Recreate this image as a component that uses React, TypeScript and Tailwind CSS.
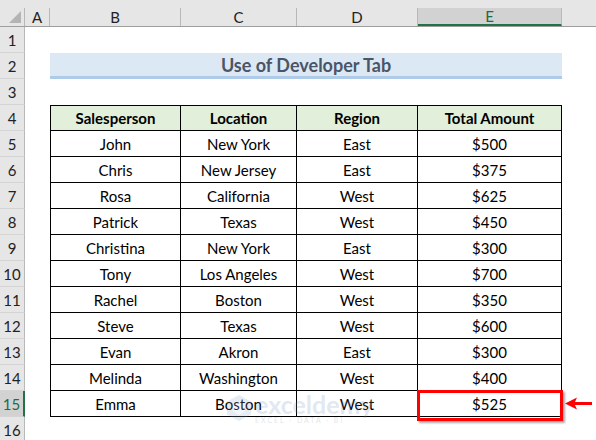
import React from 'react';

const rows = [
  ['John', 'New York', 'East', '$500'],
  ['Chris', 'New Jersey', 'East', '$375'],
  ['Rosa', 'California', 'West', '$625'],
  ['Patrick', 'Texas', 'West', '$450'],
  ['Christina', 'New York', 'East', '$300'],
  ['Tony', 'Los Angeles', 'West', '$700'],
  ['Rachel', 'Boston', 'West', '$350'],
  ['Steve', 'Texas', 'West', '$600'],
  ['Evan', 'Akron', 'East', '$300'],
  ['Melinda', 'Washington', 'West', '$400'],
  ['Emma', 'Boston', 'West', '$525'],
];

const widths = ['w-[131px]', 'w-[116px]', 'w-[121px]', 'w-[144px]'];

function RowHead({ n, active }: { n: number; active?: boolean }) {
  return (
    <div
      className={`w-[25px] h-[26px] shrink-0 flex items-center justify-center pt-[2px] text-[15px] border-b border-[#d4d4d4] ${
        active
          ? 'bg-[#d2d2d2] text-[#1e6b44] border-r-2 border-r-[#217346]'
          : 'bg-[#e6e6e6] text-[#222] border-r border-r-[#b8b8b8]'
      }`}
    >
      {n}
    </div>
  );
}

export default function App() {
  return (
    <div className="w-[596px] h-[440px] overflow-hidden bg-white relative font-['Lato','Open_Sans',sans-serif] text-black">
      {/* strip above headers */}
      <div className="h-[8px] bg-[#e6e6e6]" />

      {/* column headers */}
      <div className="flex h-[19px] bg-[#e6e6e6] border-b border-[#9e9e9e] text-[15px] text-[#222]">
        <div className="w-[25px] shrink-0 relative border-r border-[#b8b8b8]">
          <div className="absolute right-[3px] bottom-[3px] w-0 h-0 border-l-[12px] border-l-transparent border-b-[12px] border-b-[#b4b4b4]" />
        </div>
        <div className="w-[25px] shrink-0 flex items-center justify-center border-r border-[#b8b8b8]">A</div>
        <div className="w-[131px] shrink-0 flex items-center justify-center border-r border-[#b8b8b8]">B</div>
        <div className="w-[116px] shrink-0 flex items-center justify-center border-r border-[#b8b8b8]">C</div>
        <div className="w-[121px] shrink-0 flex items-center justify-center border-r border-[#b8b8b8]">D</div>
        <div className="w-[144px] shrink-0 flex items-center justify-center bg-[#d2d2d2] text-[#1e6b44] border-b-2 border-[#217346] border-r border-r-[#b8b8b8]">E</div>
        <div className="flex-1" />
      </div>

      {/* row 1 */}
      <div className="flex">
        <RowHead n={1} />
      </div>

      {/* row 2 title */}
      <div className="flex">
        <RowHead n={2} />
        <div className="w-[25px] shrink-0" />
        <div className="w-[512px] shrink-0 h-[26px] bg-[#dce9f5] border-b-[3px] border-[#aecbea] flex items-center justify-center pt-[2px] text-[18px] font-bold text-[#4a5568]">
          Use of Developer Tab
        </div>
      </div>

      {/* row 3 */}
      <div className="flex">
        <RowHead n={3} />
      </div>

      {/* row 4 header */}
      <div className="flex">
        <RowHead n={4} />
        <div className="w-[25px] shrink-0" />
        {['Salesperson', 'Location', 'Region', 'Total Amount'].map((h, i) => (
          <div
            key={h}
            className={`${widths[i]} shrink-0 h-[26px] bg-[#e2efda] border-t border-b border-r border-black ${
              i === 0 ? 'border-l' : ''
            } flex items-center justify-center text-[15px] font-bold`}
          >
            {h}
          </div>
        ))}
      </div>

      {/* data rows */}
      {rows.map((r, ri) => (
        <div className="flex" key={ri}>
          <RowHead n={ri + 5} active={ri === rows.length - 1} />
          <div className="w-[25px] shrink-0" />
          {r.map((c, i) => (
            <div
              key={i}
              className={`${widths[i]} shrink-0 h-[26px] border-b border-r border-black ${
                i === 0 ? 'border-l' : ''
              } flex items-center justify-center pt-[2px] text-[15px]`}
            >
              {c}
            </div>
          ))}
        </div>
      ))}

      {/* row 16 partial */}
      <div className="flex">
        <RowHead n={16} />
      </div>

      {/* watermark */}
      <div className="absolute left-[226px] top-[392px] flex items-center gap-[3px] opacity-20 pointer-events-none">
        <svg width="26" height="28" viewBox="0 0 26 28">
          <polygon points="13,1 25,7.5 25,20.5 13,27 1,20.5 1,7.5" fill="#8aa4c8" />
          <polygon points="13,7 19,10.5 19,17.5 13,21 7,17.5 7,10.5" fill="#c9d6ea" />
        </svg>
        <div className="flex flex-col leading-none">
          <span className="text-[25px] font-bold text-[#6f8fbf]">exceldemy</span>
          <span className="text-[7px] tracking-[2px] text-[#7a8796]">EXCEL · DATA · BI</span>
        </div>
      </div>

      {/* red highlight */}
      <div className="absolute left-[417px] top-[390px] w-[146px] h-[31px] border-[3px] border-[#ff0000] shadow-[2px_2px_2px_rgba(0,0,0,0.35)]" />
      <svg className="absolute left-[565px] top-[397px]" width="28" height="13" viewBox="0 0 28 13">
        <polygon points="0,6.5 12,0.5 10,5 27,5 27,8 10,8 12,12.5" fill="#ff0000" />
      </svg>
    </div>
  );
}
